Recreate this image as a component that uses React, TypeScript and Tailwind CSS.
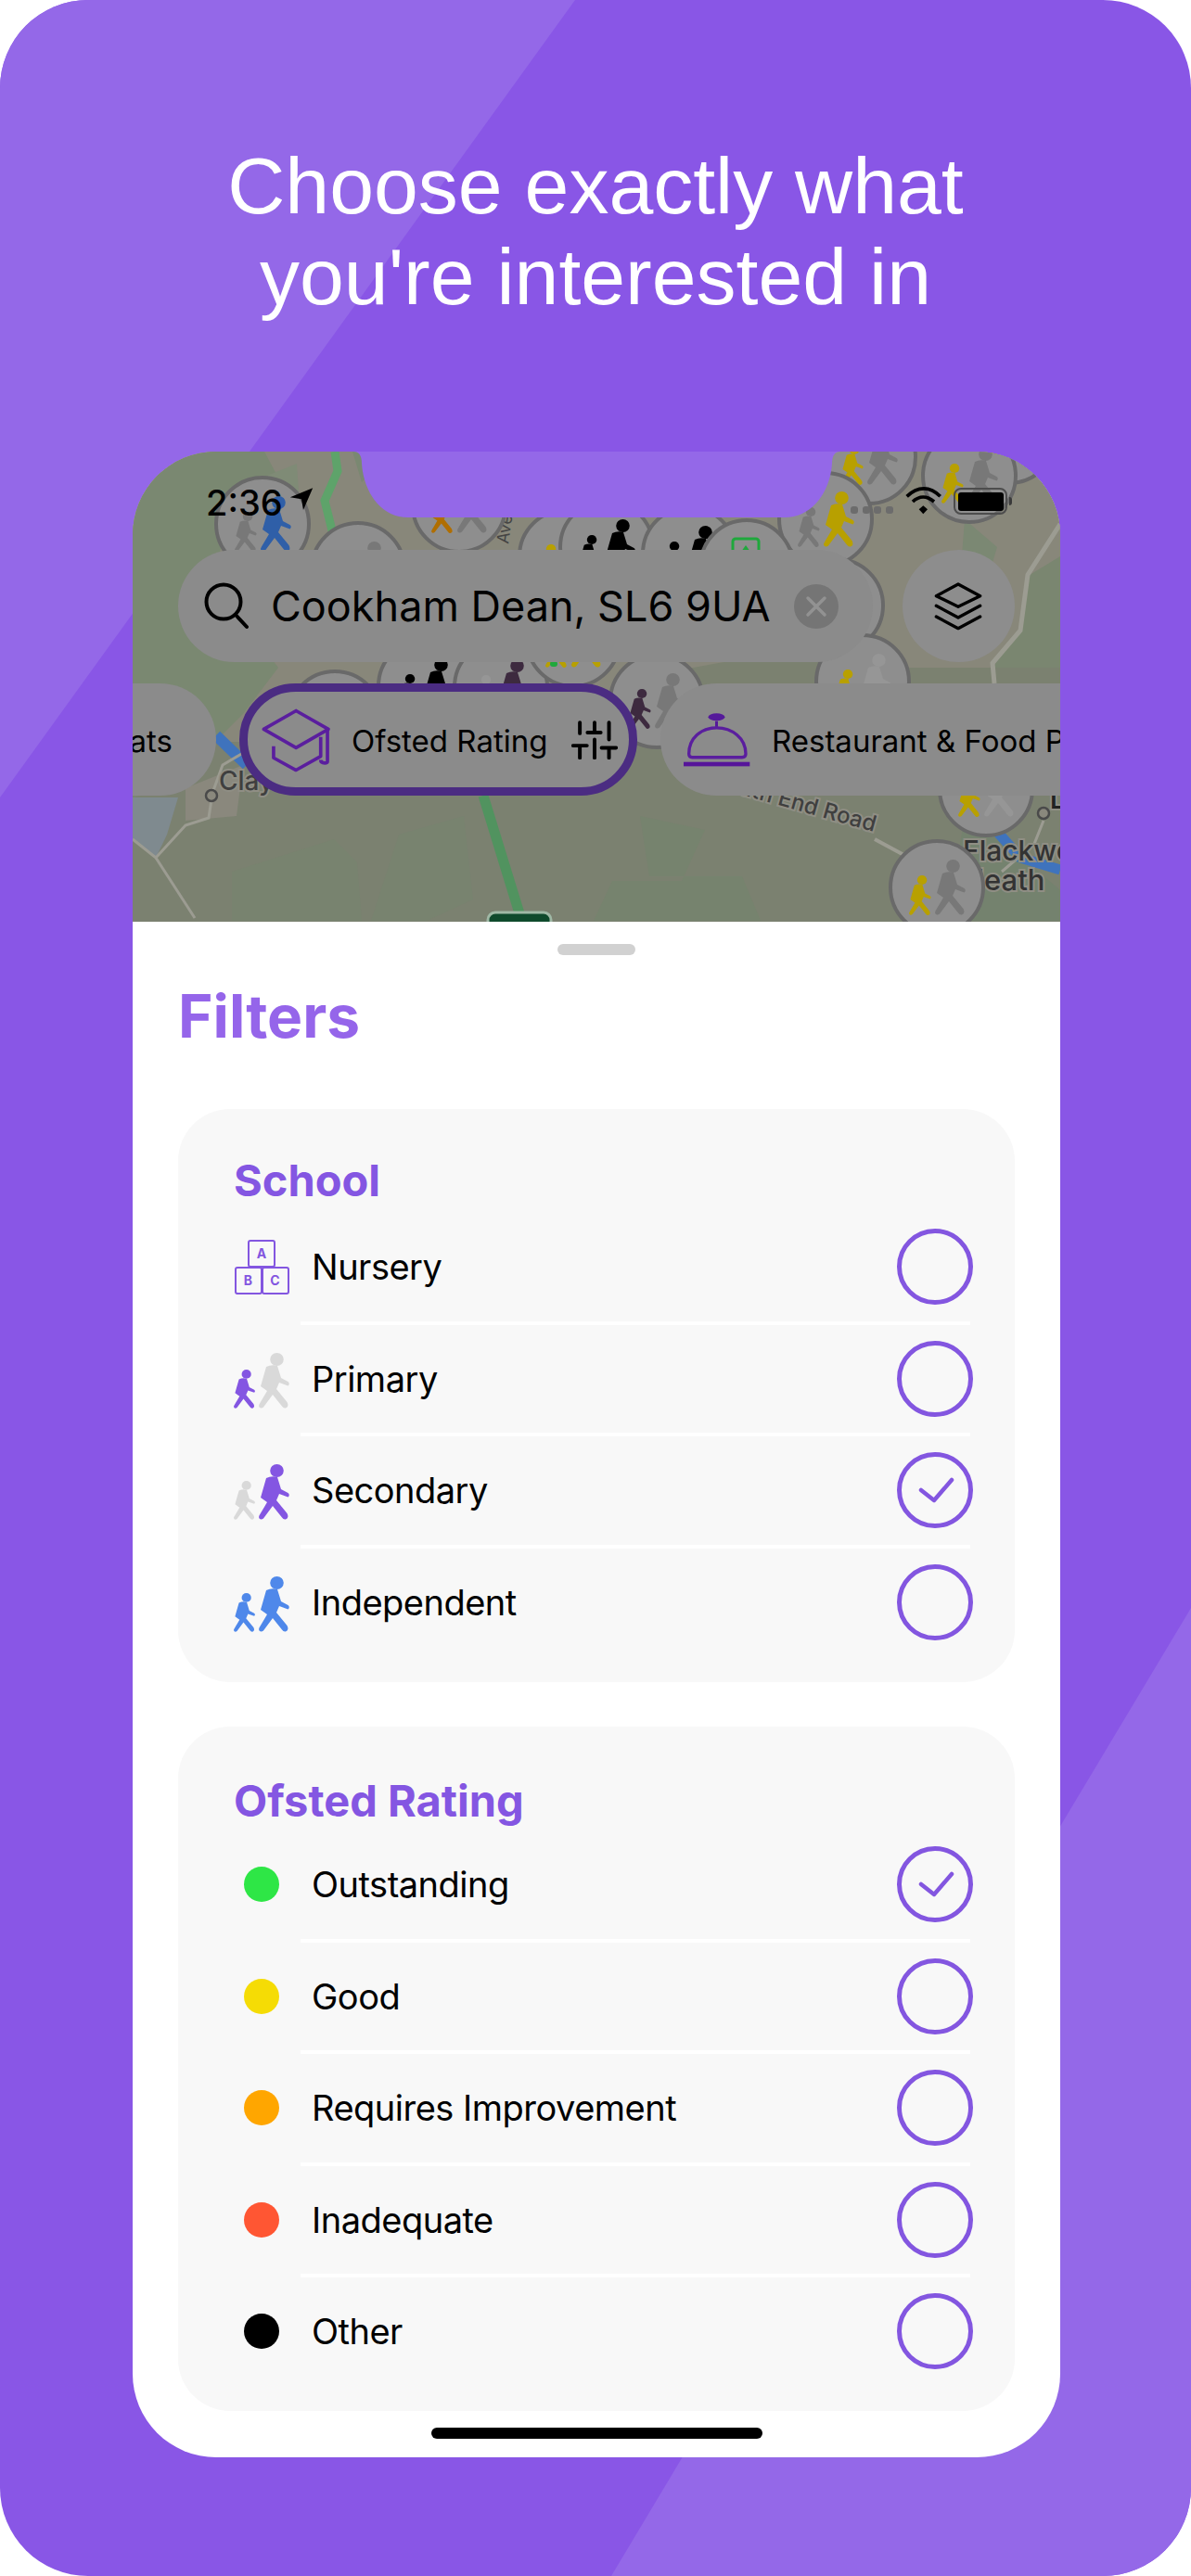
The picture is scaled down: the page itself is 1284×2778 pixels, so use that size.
type PinData = { x: number; y: number; small: string; big: string };

const GREY = "#787878";
const YELLOW = "#b8a000";
const BLACK = "#000000";
const PLUM = "#3d2a3f";

const firstPins: PinData[] = [
  { x: 283, y: 565, small: GREY, big: "#2f5fa8" },
  { x: 386, y: 614, small: GREY, big: GREY },
  { x: 495, y: 545, small: "#b06e00", big: GREY },
  { x: 610, y: 600, small: YELLOW, big: GREY },
  { x: 654, y: 590, small: BLACK, big: BLACK },
  { x: 743, y: 597, small: BLACK, big: BLACK },
  { x: 937, y: 493, small: YELLOW, big: GREY },
  { x: 1088, y: 471, small: YELLOW, big: GREY },
  { x: 1045, y: 513, small: YELLOW, big: GREY },
  { x: 890, y: 560, small: GREY, big: YELLOW },
  { x: 902, y: 653, small: GREY, big: GREY },
  { x: 930, y: 735, small: YELLOW, big: "#969696" },
  { x: 361, y: 774, small: GREY, big: GREY },
  { x: 458, y: 740, small: BLACK, big: BLACK },
  { x: 540, y: 741, small: "#969696", big: PLUM },
  { x: 618, y: 690, small: YELLOW, big: YELLOW },
  { x: 708, y: 756, small: PLUM, big: GREY },
  { x: 1063, y: 851, small: YELLOW, big: "#969696" },
];

function Walker({ x, y, scale = 1, color }: { x: number; y: number; scale?: number; color: string }) {
  return (
    <g transform={`translate(${x} ${y}) scale(${scale})`} fill={color}>
      <ellipse cx="19.5" cy="7" rx="7.3" ry="7" />
      <path d="M8 15Q14 12 20 14L24 27L31.5 31Q34 33 31.5 35.5L22 32L19 39L30.5 53Q33 58 29 59.5Q26.5 60 25 57.5L15 45L5 58.5Q2.5 60.5.5 58.5Q-.5 56.5 1 54.5L9 41L2 36Z" />
    </g>
  );
}

function Pin({ x, y, small, big }: PinData) {
  return (
    <g>
      <circle cx={x} cy={y} r="50" fill="#8e8e8e" stroke="#696969" strokeWidth="4" />
      <Walker x={x - 30} y={y - 13} scale={0.72} color={small} />
      <Walker x={x - 2} y={y - 30} color={big} />
    </g>
  );
}

function MapArt() {
  const label = { fontFamily: "Inter, sans-serif", paintOrder: "stroke" as const, stroke: "#8f8e84", strokeWidth: 4 };
  return (
    <svg viewBox="143 487 1000 507" className="absolute inset-0 h-full w-full">
      <rect x="143" y="487" width="1000" height="507" fill="#7b8170" />
      <path d="M143 487H1143V720H980L860 700L690 730L600 790L400 800L143 800Z" fill="#88877a" />
      <path d="M143 487H285L300 515L255 545L235 600L270 680L300 720L262 770L232 800L190 850L143 860Z" fill="#7a8871" />
      <path d="M270 520L320 500L322 530L270 545Z" fill="#7f8b76" />
      <path d="M390 520L420 487H380Z" fill="#7a8871" />
      <path d="M1040 560L1075 590L1060 640L1035 625Z" fill="#7b8873" />
      <path d="M1110 620L1143 600V720H1070L1100 680Z" fill="#7a8670" />
      <path d="M143 860H192L180 900L168 925L143 905Z" fill="#7f8a8f" />
      <path d="M200 850L262 825L255 880L200 885Z" fill="#8a887d" />
      <path d="M690 880L760 895L735 950L660 950L640 993H820L800 945L700 945Z" fill="#76836e" />
      <path d="M250 940L360 905L385 930L390 993H250Z" fill="#78836f" />
      <path d="M430 900L500 880L510 970L460 993H400Z" fill="#78836f" />
      <path d="M1040 880L1090 915L1143 960V993H990L1030 940Z" fill="#74826e" />
      <path d="M143 765L192 810" stroke="#3f73bd" strokeWidth="12" fill="none" />
      <path d="M233 793L266 825" stroke="#3f73bd" strokeWidth="12" fill="none" />
      <path d="M1076 898L1100 925L1143 938" stroke="#3f73bd" strokeWidth="11" fill="none" />
      <path d="M361 487L364 508L350 540L360 580L366 713" stroke="#5ea36a" strokeWidth="9" fill="none" />
      <path d="M521 858L560 985" stroke="#51935f" strokeWidth="11" fill="none" />
      <rect x="526" y="984" width="68" height="24" rx="8" fill="#0f4a2c" stroke="#9fb8a5" strokeWidth="3" />
      <path d="M143 905L168 925L200 890L225 882L228 862" stroke="#9c9c92" strokeWidth="3" fill="none" />
      <path d="M168 925L210 990" stroke="#9c9c92" strokeWidth="3" fill="none" />
      <path d="M228 858L240 825L262 812" stroke="#9c9c92" strokeWidth="3" fill="none" />
      <path d="M1143 565L1108 620L1100 680L1070 715L1072 737" stroke="#9c9c92" strokeWidth="5" fill="none" />
      <path d="M943 905L980 925" stroke="#9c9c92" strokeWidth="4" fill="none" />
      <path d="M1125 885L1115 910L1080 940" stroke="#9c9c92" strokeWidth="3" fill="none" />
      <circle cx="228" cy="858" r="6" fill="#8a887d" stroke="#4a4a4a" strokeWidth="2.5" />
      <circle cx="1125" cy="877" r="6" fill="#8a887d" stroke="#4a4a4a" strokeWidth="2.5" />
      <text x="236" y="852" fontSize="28" fontWeight="500" fill="#3f3f3f" style={label}>Clay</text>
      <text x="1132" y="872" fontSize="28" fontWeight="600" fill="#222" style={label}>L</text>
      <text x="1038" y="928" fontSize="30" fontWeight="500" fill="#333" style={label}>Flackwell</text>
      <text x="1038" y="960" fontSize="31" fontWeight="500" fill="#333" style={label}>Heath</text>
      <text textAnchor="end" fontSize="24" fontWeight="500" fill="#3f3f3f" style={label} transform="translate(942 897) rotate(15.7)">Heath End Road</text>
      <text fontSize="18" fill="#444" transform="translate(548 587) rotate(-82)">Avenue</text>

      {firstPins.map((p, i) => (
        <Pin key={i} {...p} />
      ))}

      {/* pin with the green building */}
      <circle cx="805" cy="611" r="50" fill="#8e8e8e" stroke="#696969" strokeWidth="4" />
      <rect x="790" y="581" width="28" height="30" rx="3" fill="none" stroke="#1fa83c" strokeWidth="3" />
      <path d="M804 588L809 595H799Z" fill="#1fa83c" />
      <Pin x={1010} y={957} small={YELLOW} big={GREY} />
      <rect x="593" y="713" width="8" height="6" rx="3" fill="#1fa83c" />

      {/* notch sits on the map and shows the lighter purple */}
      <path d="M381 487Q390 487 390 500C392 530 410 558 440 558H846C876 558 895 530 897 500Q897 487 906 487Z" fill="#9468e8" />
    </svg>
  );
}

function StatusBar() {
  return (
    <div className="absolute inset-x-0 top-0 h-[100px]">
      <span className="absolute left-[79px] top-[32px] text-[38px] leading-[46px] font-medium text-black">2:36</span>
      <svg viewBox="510 118 90 85" className="absolute left-[167px] top-[37px] h-[28px] w-[30px]">
        <path d="M592 125L518 155L555 161L561 197Z" fill="black" />
      </svg>
      <div className="absolute left-[774px] top-[59px] flex gap-[4.5px]">
        {[0, 1, 2, 3].map((d) => (
          <div key={d} className="h-[8px] w-[8px] rounded-[3px] bg-[#6c6c6c]" />
        ))}
      </div>
      <svg viewBox="400 115 120 90" className="absolute left-[833px] top-[38px] h-[30px] w-[40px]">
        <path d="M405 146C440 112 480 112 513 146" stroke="black" strokeWidth="11" fill="none" />
        <path d="M424 163C445 143 470 143 493 163" stroke="black" strokeWidth="11" fill="none" />
        <path d="M444 188L458 176L472 188L458 203Z" fill="black" />
      </svg>
      <div className="absolute left-[885px] top-[39px] flex h-[29px] w-[58px] items-center justify-center rounded-[8px] border-[2px] border-[#4d4d4d]">
        <div className="h-[20px] w-[49px] rounded-[3px] bg-black" />
      </div>
      <div className="absolute left-[945px] top-[49px] h-[9px] w-[3px] rounded-r-full bg-[#3a3a3a]" />
    </div>
  );
}

function SearchBar() {
  return (
    <div className="absolute left-[49px] top-[106px] flex w-[902px] gap-[32px]">
      <div className="flex h-[121px] w-[750px] items-center rounded-full bg-[#8b8b8b] pl-[28px]">
        <svg viewBox="0 0 48 52" className="h-[52px] w-[48px] shrink-0">
          <circle cx="21" cy="21" r="18.5" fill="none" stroke="black" strokeWidth="4" />
          <path d="M34 35L46 48" stroke="black" strokeWidth="4" strokeLinecap="round" />
        </svg>
        <span className="ml-[24px] text-[45px] leading-[52px] whitespace-nowrap text-black">Cookham Dean, SL6 9UA</span>
        <div className="ml-[25px] flex h-[48px] w-[48px] shrink-0 items-center justify-center rounded-full bg-[#757575]">
          <svg viewBox="0 0 24 24" className="h-[24px] w-[24px]">
            <path d="M3 3L21 21M21 3L3 21" stroke="#929292" strokeWidth="3.5" strokeLinecap="round" />
          </svg>
        </div>
      </div>
      <div className="flex h-[121px] w-[121px] shrink-0 items-center justify-center rounded-full bg-[#8d8d8d]">
        <svg viewBox="500 415 165 165" className="h-[55px] w-[55px]">
          <path d="M581 427L652 465L581 500L510 465Z" fill="none" stroke="black" strokeWidth="10" strokeLinejoin="round" />
          <path d="M510 497L581 535L652 497M510 532L581 570L652 532" fill="none" stroke="black" strokeWidth="10" strokeLinecap="round" strokeLinejoin="round" />
        </svg>
      </div>
    </div>
  );
}

function ChipRow() {
  return (
    <div className="absolute left-0 right-0 top-[250px] flex gap-[25px] overflow-hidden">
      <div className="-ml-[60px] flex h-[121px] w-[150px] shrink-0 items-center justify-end rounded-full bg-[#8b8b8b] pr-[47px]">
        <span className="mt-[5px] text-[33px] text-black">ats</span>
      </div>
      <div className="flex h-[121px] w-[429px] shrink-0 items-center rounded-full border-[9px] border-[#4b2c82] bg-[#8b8b8b] pl-[14px]">
        <svg viewBox="150 120 235 210" className="h-[70px] w-[78px] shrink-0">
          <path d="M265 130L370 190L265 250L160 190Z" fill="none" stroke="#5a1e9e" strokeWidth="11" strokeLinejoin="round" />
          <path d="M192 245V283L265 323L345 278V215" fill="none" stroke="#5a1e9e" strokeWidth="11" strokeLinejoin="round" />
          <path d="M367 190V295Q367 300 358 300Q345 300 345 290" fill="none" stroke="#5a1e9e" strokeWidth="11" />
        </svg>
        <span className="ml-[20px] mt-[5px] text-[33px] whitespace-nowrap text-black">Ofsted Rating</span>
        <svg viewBox="1160 160 150 130" className="ml-[26px] h-[43px] w-[50px] shrink-0">
          <path d="M1187 170V205M1187 245V285M1165 245H1210M1235 170V200M1212 202H1255M1235 225V285M1282 170V225M1258 252H1305M1282 252V285" stroke="black" strokeWidth="12" strokeLinecap="round" fill="none" />
        </svg>
      </div>
      <div className="flex h-[121px] w-[600px] shrink-0 items-center rounded-l-full bg-[#8b8b8b] pl-[22px]">
        <svg viewBox="100 130 230 190" className="h-[63px] w-[77px] shrink-0">
          <ellipse cx="215" cy="152" rx="27" ry="12" fill="#551a9a" />
          <path d="M215 165V184" stroke="#551a9a" strokeWidth="9" />
          <path d="M125 272C125 220 165 187 215 187C265 187 310 220 310 272Q310 283 298 283H136Q125 283 125 272Z" fill="none" stroke="#5a1e9e" strokeWidth="10" />
          <rect x="108" y="298" width="215" height="14" fill="#56159a" />
        </svg>
        <span className="ml-[21px] mt-[5px] text-[33px] whitespace-nowrap text-black">Restaurant &amp; Food Premises</span>
      </div>
    </div>
  );
}

function Check({ on }: { on?: boolean }) {
  return (
    <div className="flex h-[82px] w-[82px] shrink-0 items-center justify-center rounded-full border-[5px] border-[#8356e0]">
      {on && (
        <svg viewBox="0 0 72 72" className="h-[72px] w-[72px]">
          <path d="M21 36L35 47L54 25" stroke="#8356e0" strokeWidth="4.5" strokeLinecap="round" strokeLinejoin="round" fill="none" />
        </svg>
      )}
    </div>
  );
}

function BlocksIcon() {
  const box = "flex h-[30px] w-[30px] items-center justify-center rounded-[3px] border-[2.5px] border-[#8356e0] text-[14px] font-bold leading-none text-[#8356e0]";
  return (
    <div className="ml-[1px] flex w-[58px] flex-col items-center">
      <div className={box}>A</div>
      <div className="flex -mt-[1px]">
        <div className={box}>B</div>
        <div className={`${box} -ml-[1px]`}>C</div>
      </div>
    </div>
  );
}

function WalkersIcon({ small, big }: { small: string; big: string }) {
  return (
    <svg viewBox="0 0 61 60" className="mt-[4px] h-[60px] w-[61px]">
      <Walker x={0} y={18} scale={0.7} color={small} />
      <Walker x={27} y={0} color={big} />
    </svg>
  );
}

function Row({ icon, label, on, last }: { icon: React.ReactNode; label: string; on?: boolean; last?: boolean }) {
  return (
    <>
      <div className="flex h-[116.5px] items-center">
        <div className="flex w-[84px] shrink-0 items-center">{icon}</div>
        <span className="flex-1 text-[38px] leading-[48px] tracking-[-0.5px] text-black">{label}</span>
        <Check on={on} />
      </div>
      {!last && <div className="ml-[72px] mr-[3px] h-[4px] bg-white" />}
    </>
  );
}

function Dot({ color }: { color: string }) {
  return <div className={`ml-[11px] h-[38px] w-[38px] rounded-full ${color}`} />;
}

export default function App() {
  return (
    <div className="relative h-[2778px] w-[1284px] overflow-hidden rounded-[95px] bg-[#8956e6] pt-[151px] font-[Inter,sans-serif]">
      <div className="absolute left-0 top-0 h-[860px] w-[620px] bg-[#9468e8] [clip-path:polygon(0_0,100%_0,0_100%)]" />
      <div className="absolute bottom-0 right-0 h-[1044px] w-[625px] bg-[#9468e8] [clip-path:polygon(100%_0,100%_100%,0_100%)]" />

      <h1 className="relative text-center font-['Liberation_Sans',sans-serif] text-[86px] leading-[98px] font-normal text-white">
        Choose exactly what
        <br />
        you're interested in
      </h1>

      <div className="relative mx-[143px] mt-[140px] flex h-[2163px] w-[1000px] flex-col overflow-hidden rounded-[90px] bg-white">
        <div className="relative h-[507px] shrink-0 overflow-hidden">
          <MapArt />
          <StatusBar />
          <SearchBar />
          <ChipRow />
        </div>

        <div className="flex flex-1 flex-col px-[49px]">
          <div className="mx-auto mt-[24px] h-[12px] w-[84px] rounded-full bg-[#d1d1d1]" />
          <h2 className="mt-[28px] text-[64px] leading-[76px] font-bold text-[#9565ea]">Filters</h2>

          <div className="mt-[62px] rounded-[56px] bg-[#f8f8f8] pb-[28px] pl-[60px] pr-[45px] pt-[47px]">
            <h3 className="mb-[5px] text-[47px] leading-[60px] font-bold text-[#8456e2]">School</h3>
            <Row icon={<BlocksIcon />} label="Nursery" />
            <Row icon={<WalkersIcon small="#8456e2" big="#d9d9d9" />} label="Primary" />
            <Row icon={<WalkersIcon small="#d9d9d9" big="#8456e2" />} label="Secondary" on />
            <Row icon={<WalkersIcon small="#4f88ea" big="#4f88ea" />} label="Independent" last />
          </div>

          <div className="mt-[48px] rounded-[56px] bg-[#f8f8f8] pb-[27px] pl-[60px] pr-[45px] pt-[50px]">
            <h3 className="mb-[2px] text-[47px] leading-[60px] font-bold text-[#8456e2]">Ofsted Rating</h3>
            <Row icon={<Dot color="bg-[#2ee646]" />} label="Outstanding" on />
            <Row icon={<Dot color="bg-[#f5dc05]" />} label="Good" />
            <Row icon={<Dot color="bg-[#ffa600]" />} label="Requires Improvement" />
            <Row icon={<Dot color="bg-[#ff5633]" />} label="Inadequate" />
            <Row icon={<Dot color="bg-black" />} label="Other" last />
          </div>

          <div className="mx-auto mt-[18px] h-[12px] w-[357px] rounded-full bg-black" />
        </div>
      </div>
    </div>
  );
}
